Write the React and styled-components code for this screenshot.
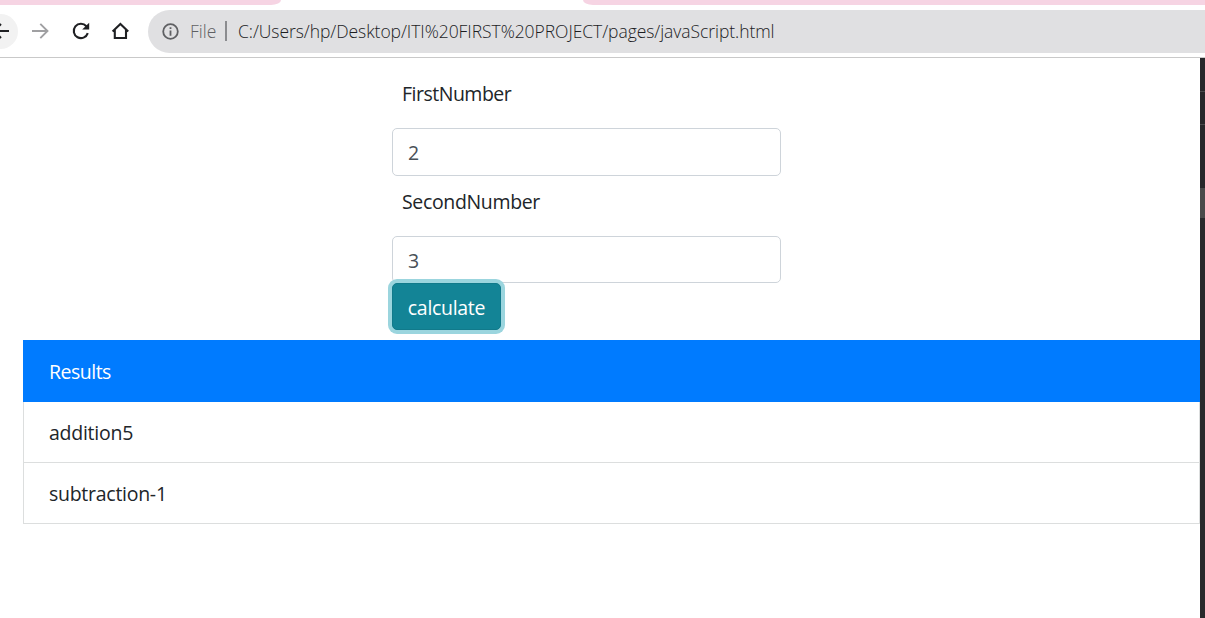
import React from 'react';
import styled, { createGlobalStyle } from 'styled-components';

const GlobalStyle = createGlobalStyle`
  *, *::before, *::after { box-sizing: border-box; }
  body {
    margin: 0;
    background: #fff;
    font-family: "Open Sans", "Noto Sans", sans-serif;
    overflow: hidden;
  }
`;

const Window = styled.div`
  width: 1205px;
  height: 618px;
  display: flex;
  flex-direction: column;
  overflow: hidden;
`;

const TabStrip = styled.div`
  display: flex;
  justify-content: space-between;
  height: 5px;
  flex: none;
`;

const TabEdge = styled.div`
  width: ${(p) => p.$width}px;
  background: #f6d4e3;
  border-radius: ${(p) => (p.$side === 'left' ? '0 0 10px 0 / 0 0 5px 0' : '0 0 0 10px / 0 0 0 5px')};
`;

const Toolbar = styled.div`
  display: flex;
  align-items: center;
  flex: none;
  height: 53px;
  border-bottom: 1px solid #c9c9c9;
`;

const NavButton = styled.div`
  flex: none;
  display: flex;
  align-items: center;
  justify-content: center;
  width: ${(p) => p.$width}px;
  height: 35px;
  background: ${(p) => (p.$hovered ? '#f2f2f2' : 'transparent')};
  border-radius: ${(p) => (p.$hovered ? '0 18px 18px 0' : '0')};
  svg { display: block; }
`;

const AddressBar = styled.div`
  flex: 1;
  display: flex;
  align-items: center;
  height: 43px;
  margin-left: 8px;
  padding-left: 14px;
  background: #e0e0e2;
  border-radius: 22px 0 0 22px;
  white-space: nowrap;
`;

const Scheme = styled.span`
  width: 35px;
  margin-left: 11px;
  font-size: 17.5px;
  line-height: 24px;
  font-weight: 350;
  letter-spacing: 0;
  color: #5f6063;
`;

const Separator = styled.span`
  width: 2px;
  height: 20px;
  background: #8b8c8f;
`;

const Url = styled.span`
  margin-left: 11px;
  font-size: 17.5px;
  line-height: 24px;
  font-weight: 350;
  letter-spacing: -0.06px;
  color: #1c1d1f;
`;

const Body = styled.div`
  flex: 1;
  display: flex;
  min-height: 0;
`;

const Page = styled.main`
  width: 1200px;
  padding-left: 23px;
`;

const Form = styled.div`
  width: 389px;
  height: 282px;
  margin-left: 369px;
  padding-top: 16px;
  display: flex;
  flex-direction: column;
  align-items: flex-start;
`;

const Label = styled.label`
  height: 54px;
  padding: 5px 10px 0;
  font-size: 19.5px;
  line-height: 30px;
  font-weight: 380;
  letter-spacing: ${(p) => p.$tracking || 0}px;
  color: #212529;
`;

const Input = styled.input`
  width: 389px;
  height: ${(p) => p.$height}px;
  margin: 0 0 ${(p) => p.$gap}px;
  padding: 1px 15px 0;
  border: 1px solid #ced4da;
  border-radius: 5px;
  outline: none;
  background: #fff;
  color: #495057;
  font: 380 19.5px/30px "Open Sans", "Noto Sans", sans-serif;
`;

const Button = styled.button`
  width: 109px;
  height: 47px;
  padding: 3px 0 0;
  border: 1px solid #117a8b;
  border-radius: 5px;
  background: #138496;
  box-shadow: 0 0 0 4px #9bd5de;
  color: #fff;
  font: 400 19.5px/30px "Open Sans", "Noto Sans", sans-serif;
  letter-spacing: -0.3px;
`;

const Results = styled.ul`
  margin: 0;
  padding: 0;
  list-style: none;
`;

const ResultItem = styled.li`
  height: ${(p) => (p.$active ? 62 : 61)}px;
  padding: 16px 25px 0;
  border: 1px solid ${(p) => (p.$active ? '#007bff' : '#dcdede')};
  border-top: ${(p) => (p.$active ? '1px solid #007bff' : '0')};
  background: ${(p) => (p.$active ? '#007bff' : '#fff')};
  color: ${(p) => (p.$active ? '#fff' : '#212529')};
  font-size: 19.5px;
  line-height: 30px;
  font-weight: ${(p) => (p.$active ? 400 : 380)};
  letter-spacing: ${(p) => p.$tracking || 0}px;
`;

const SidePanel = styled.aside`
  width: 5px;
  background: #29292b;
`;

const PanelRow = styled.div`
  height: ${(p) => p.$height}px;
  background: ${(p) => (p.$selected ? '#4a4a4a' : '#27272a')};
  border-bottom: ${(p) => (p.$line ? '1px solid #4a4a4c' : '0')};
`;

export default function App() {
  return (
    <>
      <GlobalStyle />
      <Window>
        <TabStrip>
          <TabEdge $width={281} $side="left" />
          <TabEdge $width={622} $side="right" />
        </TabStrip>
        <Toolbar>
          <NavButton $width={18} $hovered>
            <svg width="18" height="20" viewBox="0 0 18 20" fill="none" stroke="#1f2023" strokeWidth="2">
              <path d="M9 10H-6M1 3L-6 10L1 17" />
            </svg>
          </NavButton>
          <NavButton $width={44}>
            <svg width="20" height="20" viewBox="0 0 20 20" fill="none" stroke="#a0a0a2" strokeWidth="1.9">
              <path d="M2 10H17.3M10.3 2.8L17.5 10L10.3 17.2" />
            </svg>
          </NavButton>
          <NavButton $width={38}>
            <svg width="20" height="20" viewBox="0 0 20 20" fill="none">
              <path d="M16.8 12.2A7.2 7.2 0 1 1 15.4 5.2L17 7" stroke="#1f2023" strokeWidth="2.1" />
              <path d="M18.2 1.8V8.6H11.2Z" fill="#1f2023" />
            </svg>
          </NavButton>
          <NavButton $width={40}>
            <svg width="20" height="20" viewBox="0 0 20 20" fill="none" stroke="#1f2023" strokeWidth="2.1">
              <path d="M2.6 10.4L10.4 3L18.2 10.4M4.8 8.8V17H16V8.8" />
            </svg>
          </NavButton>
          <AddressBar>
            <svg width="17" height="17" viewBox="0 0 17 17" fill="none" stroke="#5f6063" strokeWidth="1.8">
              <circle cx="8.5" cy="8.5" r="7.3" />
              <path d="M8.5 7.5V12.7M8.5 4.3V6.1" />
            </svg>
            <Scheme>File</Scheme>
            <Separator />
            <Url>C:/Users/hp/Desktop/ITI%20FIRST%20PROJECT/pages/javaScript.html</Url>
          </AddressBar>
        </Toolbar>
        <Body>
          <Page>
            <Form>
              <Label htmlFor="first" $tracking={-0.5}>FirstNumber</Label>
              <Input id="first" defaultValue="2" $height={48} $gap={6} />
              <Label htmlFor="second" $tracking={-0.35}>SecondNumber</Label>
              <Input id="second" defaultValue="3" $height={47} $gap={0} />
              <Button type="button">calculate</Button>
            </Form>
            <Results>
              <ResultItem $active $tracking={-0.5}>Results</ResultItem>
              <ResultItem $tracking={-0.25}>addition5</ResultItem>
              <ResultItem $tracking={-0.27}>subtraction-1</ResultItem>
            </Results>
          </Page>
          <SidePanel>
            <PanelRow $height={34} $line />
            <PanelRow $height={33} $line />
            <PanelRow $height={63} />
            <PanelRow $height={30} $selected />
          </SidePanel>
        </Body>
      </Window>
    </>
  );
}
